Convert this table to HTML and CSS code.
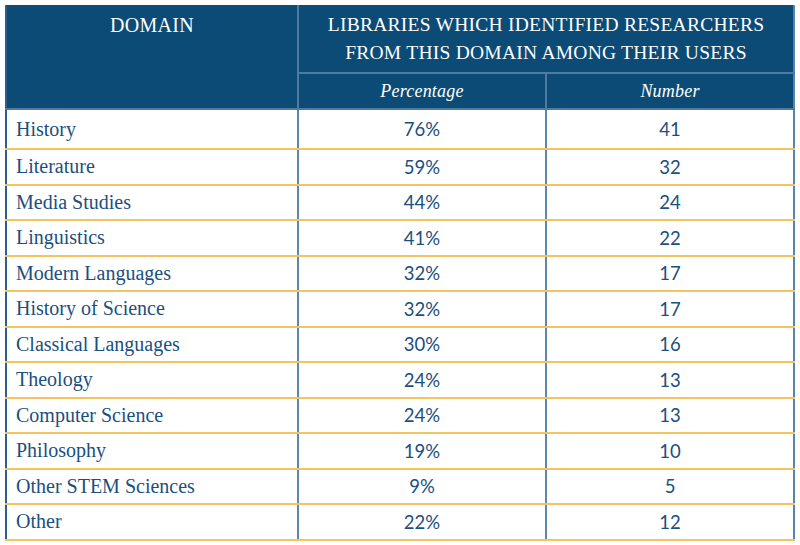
FILE: index.html
```html
<!DOCTYPE html>
<html>
<head>
<meta charset="utf-8">
<link rel="stylesheet" href="styles.css">
</head>
<body>
<table class="tbl">
  <colgroup>
    <col class="c1"><col class="c2"><col class="c3">
  </colgroup>
  <thead>
    <tr class="h1">
      <th rowspan="2" class="dom">DOMAIN</th>
      <th colspan="2" class="lib">LIBRARIES WHICH IDENTIFIED RESEARCHERS<br>FROM THIS DOMAIN AMONG THEIR USERS</th>
    </tr>
    <tr class="h2">
      <th class="sub">Percentage</th>
      <th class="sub">Number</th>
    </tr>
  </thead>
  <tbody>
    <tr class="first"><td class="name">History</td><td class="num">76%</td><td class="num">41</td></tr>
    <tr><td class="name">Literature</td><td class="num">59%</td><td class="num">32</td></tr>
    <tr><td class="name">Media Studies</td><td class="num">44%</td><td class="num">24</td></tr>
    <tr><td class="name">Linguistics</td><td class="num">41%</td><td class="num">22</td></tr>
    <tr><td class="name">Modern Languages</td><td class="num">32%</td><td class="num">17</td></tr>
    <tr><td class="name">History of Science</td><td class="num">32%</td><td class="num">17</td></tr>
    <tr><td class="name">Classical Languages</td><td class="num">30%</td><td class="num">16</td></tr>
    <tr><td class="name">Theology</td><td class="num">24%</td><td class="num">13</td></tr>
    <tr><td class="name">Computer Science</td><td class="num">24%</td><td class="num">13</td></tr>
    <tr><td class="name">Philosophy</td><td class="num">19%</td><td class="num">10</td></tr>
    <tr><td class="name">Other STEM Sciences</td><td class="num">9%</td><td class="num">5</td></tr>
    <tr><td class="name">Other</td><td class="num">22%</td><td class="num">12</td></tr>
  </tbody>
</table>
</body>
</html>
```

FILE: styles.css
```css
html, body {
  margin: 0;
  padding: 0;
  background: #ffffff;
}
body {
  padding: 5px 0 0 5px;
}
.tbl {
  border-collapse: collapse;
  table-layout: fixed;
  width: 788px;
  border-left: 2px solid #2d5f8c;
  border-right: 2px solid #5b83a9;
}
.c1 { width: 292px; }
.c2 { width: 248px; }
.c3 { width: 248px; }

thead th {
  background: #0c4b75;
  color: #ffffff;
  font-family: "Liberation Serif", "DejaVu Serif", serif;
  font-weight: normal;
  padding: 0;
  border: 2px solid #4f7aa1;
  border-top: none;
}
thead th:first-child { border-left: none; }
thead th:last-child { border-right: none; }
.h1 { height: 68px; }
.h2 { height: 36px; }
.dom {
  vertical-align: top;
  font-size: 20px;
  line-height: 28px;
  padding-top: 6px;
  letter-spacing: 0.3px;
}
.lib {
  font-size: 19.5px;
  line-height: 28px;
  letter-spacing: 0.25px;
  padding-top: 1px;
}
.sub {
  font-style: italic;
  font-size: 18px;
  letter-spacing: 0.2px;
}

tbody tr { height: 35.5px; }
tbody tr.first { height: 40px; }
tbody td {
  padding: 0;
  border-bottom: 2px solid #f5c360;
  border-left: 2px solid #5f86ab;
  color: #1b4f7e;
}
tbody td:first-child { border-left: none; }
.name {
  font-family: "Liberation Serif", "DejaVu Serif", serif;
  font-size: 20px;
  padding-left: 9px;
}
.num {
  font-family: Lato, "DejaVu Sans", sans-serif;
  font-size: 18.5px;
  text-align: center;
}
```
